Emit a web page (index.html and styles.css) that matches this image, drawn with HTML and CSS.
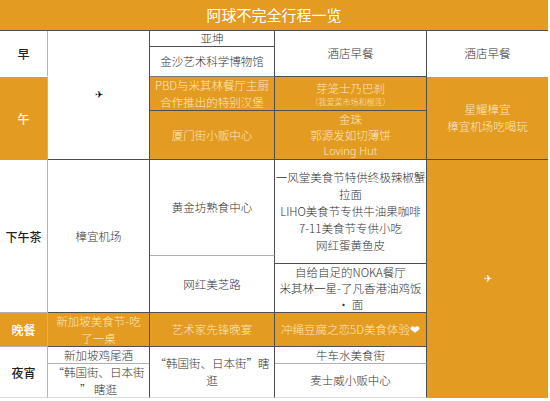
FILE: index.html
```html
<!DOCTYPE html>
<html lang="zh-CN">
<head>
<meta charset="utf-8">
<link rel="stylesheet" href="styles.css">
</head>
<body>
<div class="sheet">
  <div class="title">阿球不完全行程一览</div>
  <div class="grid">
    <!-- R1 -->
    <div class="c k lab bb-n r2">早</div>
    <div class="c plane r4"><span class="icon">✈</span></div>
    <div class="c tight">亚坤</div>
    <div class="c r2">酒店早餐</div>
    <div class="c r2 last bb-n">酒店早餐</div>
    <!-- R2 -->
    <div class="c bb-m">金沙艺术科学博物馆</div>
    <!-- R3 -->
    <div class="c k lab o r2 bb-n">午</div>
    <div class="c o">PBD与米其林餐厅主厨<br>合作推出的特别汉堡</div>
    <div class="c o"><span class="big">芽笼士乃巴刹</span><span class="small">（我爱菜市场和榴莲）</span></div>
    <div class="c o r2 last">星耀樟宜<br>樟宜机场吃喝玩</div>
    <!-- R4 -->
    <div class="c o">厦门街小贩中心</div>
    <div class="c o lh16">金珠<br>郭源发如切薄饼<br><span class="latin">Loving Hut</span></div>
    <!-- R5 -->
    <div class="c k lab r3 bb-l">下午茶</div>
    <div class="c r3">樟宜机场</div>
    <div class="c bb-l">黄金坊熟食中心</div>
    <div class="c r2">一风堂美食节特供终极辣椒蟹<br>拉面<br>LIHO美食节专供牛油果咖啡<br>7-11美食节专供小吃<br>网红蛋黄鱼皮</div>
    <div class="c o r6 last bb-n"><span class="icon white">✈</span></div>
    <!-- R6 -->
    <div class="c r2">网红美芝路</div>
    <!-- R7 -->
    <div class="c lh16">自给自足的NOKA餐厅<br>米其林一星-了凡香港油鸡饭<br>· 面</div>
    <!-- R8 -->
    <div class="c k lab o bb-l">晚餐</div>
    <div class="c o">新加坡美食节-吃<br>了一桌</div>
    <div class="c o">艺术家先锋晚宴</div>
    <div class="c o"><span>冲绳豆腐之恋5D美食体验<span class="white">❤</span></span></div>
    <!-- R9 -->
    <div class="c k lab r2 bb-e">夜宵</div>
    <div class="c tight bb-l">新加坡鸡尾酒</div>
    <div class="c r2 bb-e">“韩国街、日本街”瞎<br>逛</div>
    <div class="c tight bb-l">牛车水美食街</div>
    <!-- R10 -->
    <div class="c bb-e">“韩国街、日本街<br>” 瞎逛</div>
    <div class="c bb-e">麦士威小贩中心</div>
  </div>
</div>
</body>
</html>
```

FILE: styles.css
```css
html, body {
  margin: 0;
  padding: 0;
  background: #ffffff;
}

.sheet {
  width: 548px;
  font-family: "Noto Sans CJK SC", "Noto Sans", sans-serif;
  font-weight: 300;
  color: #333333;
}

.title {
  height: 30px;
  line-height: 30px;
  background: #e39b21;
  border-bottom: 1px solid #4f4f4f;
  color: #ffffff;
  font-size: 15px;
  text-align: center;
  font-weight: 400;
}

.grid {
  display: grid;
  grid-template-columns: 48px 102px 125px 152px 121px;
  grid-template-rows: 16px 30px 34px 49px 96px 8px 49px 34px 17px 34px;
}

.c {
  box-sizing: border-box;
  border-right: 1px solid #4f4f4f;
  border-bottom: 1px solid #4f4f4f;
  display: flex;
  flex-direction: column;
  justify-content: center;
  align-items: center;
  text-align: center;
  font-size: 11.5px;
  line-height: 17px;
  overflow: hidden;
  padding: 0 1px;
  white-space: nowrap;
}

.r2 { grid-row: span 2; }
.r3 { grid-row: span 3; }
.r4 { grid-row: span 4; }
.r6 { grid-row: span 6; }

.o {
  background: #e39b21;
  color: #fbe8c2;
}

.k {
  border-right-color: #b5b5b5;
}

.lab {
  font-weight: 500;
  font-size: 12px;
  color: #222222;
}

.lab.o {
  color: #ffffff;
}

.last {
  border-right: none;
}

.bb-n { border-bottom-color: transparent; }
.bb-m { border-bottom-color: #7a7a7a; }
.bb-l { border-bottom-color: #b0b0b0; }
.bb-e { border-bottom-color: #dcdcdc; }

.tight {
  line-height: 15px;
}

.lh16 {
  line-height: 16px;
}

.big {
  line-height: 15px;
}

.small {
  font-size: 8px;
  line-height: 11px;
}

.latin {
  font-family: "Noto Sans", sans-serif;
  font-weight: 300;
  font-size: 11px;
}

.icon {
  font-family: "DejaVu Sans", sans-serif;
  font-size: 10px;
  line-height: 10px;
}

.white {
  color: #ffffff;
}

.plane {
  color: #111111;
}
```
